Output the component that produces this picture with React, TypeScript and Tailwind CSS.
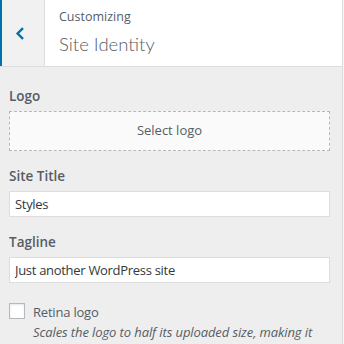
export default function App() {
  return (
    <div className="w-[344px] h-[344px] overflow-hidden bg-[#f5f5f5] font-['Open_Sans',sans-serif] text-[#555d66]">
      <div className="w-[343px] h-full border-r border-[#ddd] bg-[#eee]">
        {/* header */}
        <div className="h-[67px] bg-white border-b border-[#ddd] flex">
          <button className="w-[45px] h-full shrink-0 bg-[#f1f1f1] border-l-2 border-[#0073aa] border-r border-r-[#ddd] flex items-center justify-center">
            <svg width="10" height="13" viewBox="0 0 10 13" className="ml-[-6px]">
              <path d="M8 1.2 L2.6 6.5 L8 11.8" fill="none" stroke="#0073aa" strokeWidth="2.4" />
            </svg>
          </button>
          <div className="pl-[14px] pt-[7px]">
            <div className="text-[12.5px] leading-[20px]">Customizing</div>
            <div className="font-['Lato',sans-serif] text-[18.5px] leading-[26px] font-light mt-[4px] text-[#555d66]">
              Site Identity
            </div>
          </div>
        </div>

        {/* controls */}
        <div className="pl-[9px] pt-[19px]">
          <div className="text-[13.5px] leading-[20px] font-semibold">Logo</div>
          <button className="mt-[5px] w-[321px] h-[40px] border border-dashed border-[#b4b9be] bg-[#fafafa] text-[13px] text-[#555d66]">
            Select logo
          </button>

          <div className="mt-[15px] text-[13.5px] leading-[20px] font-semibold">Site Title</div>
          <input
            readOnly
            value="Styles"
            className="mt-[5px] block w-[321px] h-[26px] px-[5px] bg-white border border-[#ddd] text-[13px] tracking-[-0.3px] text-[#32373c] outline-none"
          />

          <div className="mt-[15px] text-[13.5px] leading-[20px] font-semibold">Tagline</div>
          <input
            readOnly
            value="Just another WordPress site"
            className="mt-[5px] block w-[321px] h-[26px] px-[5px] bg-white border border-[#ddd] text-[13px] tracking-[-0.3px] text-[#32373c] outline-none"
          />

          <div className="mt-[20px] flex">
            <span className="w-[16px] h-[16px] shrink-0 bg-white border border-[#b4b9be] shadow-[inset_0_1px_2px_rgba(0,0,0,0.1)]" />
            <div className="ml-[8px] -mt-[1px]">
              <div className="text-[13px] leading-[20px] tracking-[-0.2px]">Retina logo</div>
              <div className="text-[13px] leading-[20px] italic tracking-[-0.1px]">
                Scales the logo to half its uploaded size, making it sharp on high-res screens.
              </div>
            </div>
          </div>
        </div>
      </div>
    </div>
  )
}
